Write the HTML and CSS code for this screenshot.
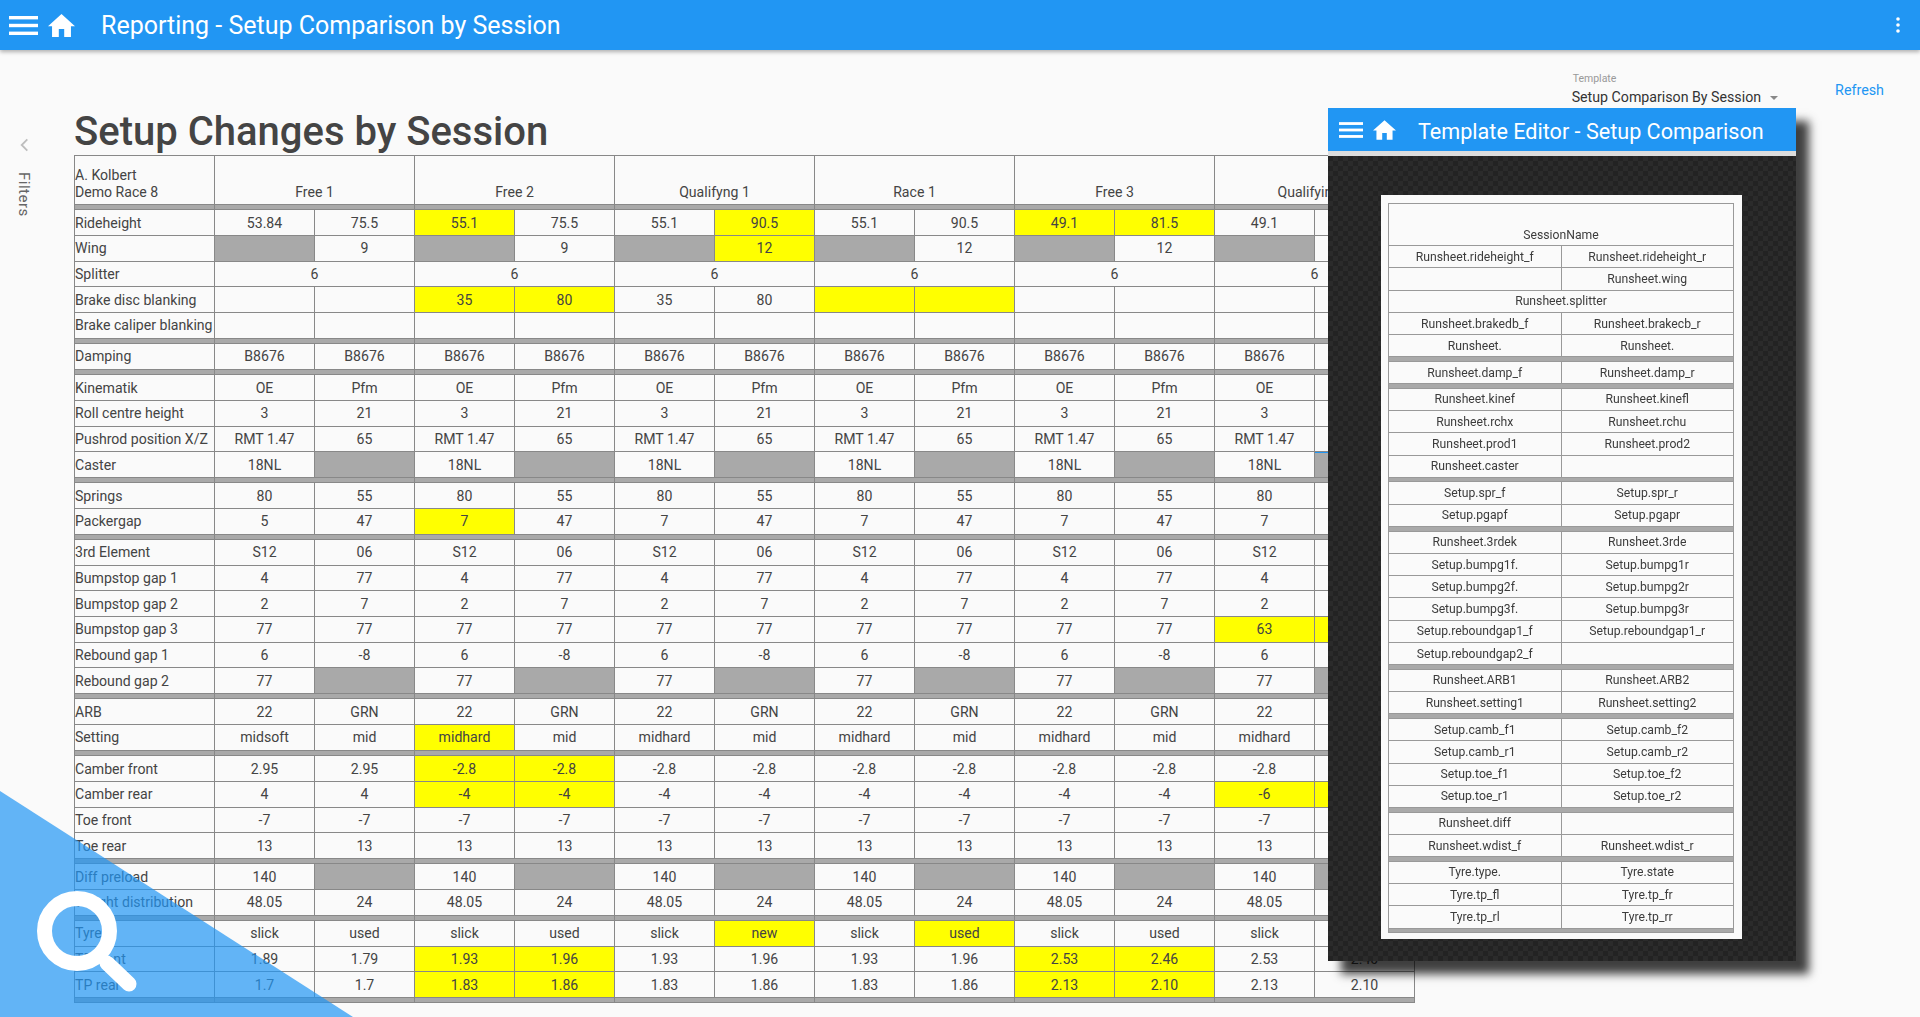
FILE: index.html
```html
<!DOCTYPE html>
<html lang="en">
<head>
    <meta charset="UTF-8">
    <title>Reporting - Setup Comparison by Session</title>
    <link rel="stylesheet" href="styles.css">
</head>
<body>
    <header class="topbar">
        <svg class="menu-icon" viewBox="0 0 29 19"><rect width="29" height="3.4" y="0"/><rect width="29" height="3.4" y="7.8"/><rect width="29" height="3.4" y="15.6"/></svg>
        <svg class="home-icon" viewBox="2 3 20 17"><path d="M10 20v-6h4v6h5v-8h3L12 3 2 12h3v8z"/></svg>
        <span class="topbar-title">Reporting - Setup Comparison by Session</span>
        <svg class="kebab-icon" viewBox="0 0 4 16"><circle cx="2" cy="2" r="1.8"/><circle cx="2" cy="8" r="1.8"/><circle cx="2" cy="14" r="1.8"/></svg>
    </header>

    <div class="page">
        <aside class="rail">
            <svg class="chevron" viewBox="0 0 8 12"><path d="M6.5 1 1.5 6l5 5" fill="none" stroke="#bdbdbd" stroke-width="1.6"/></svg>
            <span class="filters">Filters</span>
        </aside>

        <main class="content">
            <div class="toolbar">
                <div class="template-select">
                    <span class="template-label">Template</span>
                    <span class="template-value">Setup Comparison By Session<i class="caret"></i></span>
                </div>
                <a class="refresh">Refresh</a>
            </div>

            <h1>Setup Changes by Session</h1>

            <table class="report">
                <colgroup>
                    <col class="col-name">
                    <col><col><col><col><col><col><col><col><col><col><col><col>
                </colgroup>
                <tr class="head">
                    <td class="name">A. Kolbert<br>Demo Race 8</td>
                    <td colspan="2">Free 1</td><td colspan="2">Free 2</td><td colspan="2">Qualifyng 1</td><td colspan="2">Race 1</td><td colspan="2">Free 3</td><td colspan="2">Qualifying 2</td>
                </tr>
                <tr class="sep"><td></td><td colspan="2"></td><td colspan="2"></td><td colspan="2"></td><td colspan="2"></td><td colspan="2"></td><td colspan="2"></td></tr>
                <tr><td class="name">Rideheight</td><td>53.84</td><td>75.5</td><td class="hl">55.1</td><td>75.5</td><td>55.1</td><td class="hl">90.5</td><td>55.1</td><td>90.5</td><td class="hl">49.1</td><td class="hl">81.5</td><td>49.1</td><td>81.5</td></tr>
                <tr><td class="name">Wing</td><td class="na"></td><td>9</td><td class="na"></td><td>9</td><td class="na"></td><td class="hl">12</td><td class="na"></td><td>12</td><td class="na"></td><td>12</td><td class="na"></td><td>12</td></tr>
                <tr><td class="name">Splitter</td><td colspan="2">6</td><td colspan="2">6</td><td colspan="2">6</td><td colspan="2">6</td><td colspan="2">6</td><td colspan="2">6</td></tr>
                <tr><td class="name">Brake disc blanking</td><td></td><td></td><td class="hl">35</td><td class="hl">80</td><td>35</td><td>80</td><td class="hl"></td><td class="hl"></td><td></td><td></td><td></td><td></td></tr>
                <tr><td class="name">Brake caliper blanking</td><td></td><td></td><td></td><td></td><td></td><td></td><td></td><td></td><td></td><td></td><td></td><td></td></tr>
                <tr class="sep"><td></td><td colspan="2"></td><td colspan="2"></td><td colspan="2"></td><td colspan="2"></td><td colspan="2"></td><td colspan="2"></td></tr>
                <tr><td class="name">Damping</td><td>B8676</td><td>B8676</td><td>B8676</td><td>B8676</td><td>B8676</td><td>B8676</td><td>B8676</td><td>B8676</td><td>B8676</td><td>B8676</td><td>B8676</td><td>B8676</td></tr>
                <tr class="sep"><td></td><td colspan="2"></td><td colspan="2"></td><td colspan="2"></td><td colspan="2"></td><td colspan="2"></td><td colspan="2"></td></tr>
                <tr><td class="name">Kinematik</td><td>OE</td><td>Pfm</td><td>OE</td><td>Pfm</td><td>OE</td><td>Pfm</td><td>OE</td><td>Pfm</td><td>OE</td><td>Pfm</td><td>OE</td><td>Pfm</td></tr>
                <tr><td class="name">Roll centre height</td><td>3</td><td>21</td><td>3</td><td>21</td><td>3</td><td>21</td><td>3</td><td>21</td><td>3</td><td>21</td><td>3</td><td>21</td></tr>
                <tr><td class="name">Pushrod position X/Z</td><td>RMT 1.47</td><td>65</td><td>RMT 1.47</td><td>65</td><td>RMT 1.47</td><td>65</td><td>RMT 1.47</td><td>65</td><td>RMT 1.47</td><td>65</td><td>RMT 1.47</td><td>65</td></tr>
                <tr><td class="name">Caster</td><td>18NL</td><td class="na"></td><td>18NL</td><td class="na"></td><td>18NL</td><td class="na"></td><td>18NL</td><td class="na"></td><td>18NL</td><td class="na"></td><td>18NL</td><td class="na edge"></td></tr>
                <tr class="sep"><td></td><td colspan="2"></td><td colspan="2"></td><td colspan="2"></td><td colspan="2"></td><td colspan="2"></td><td colspan="2"></td></tr>
                <tr><td class="name">Springs</td><td>80</td><td>55</td><td>80</td><td>55</td><td>80</td><td>55</td><td>80</td><td>55</td><td>80</td><td>55</td><td>80</td><td>55</td></tr>
                <tr><td class="name">Packergap</td><td>5</td><td>47</td><td class="hl">7</td><td>47</td><td>7</td><td>47</td><td>7</td><td>47</td><td>7</td><td>47</td><td>7</td><td>47</td></tr>
                <tr class="sep"><td></td><td colspan="2"></td><td colspan="2"></td><td colspan="2"></td><td colspan="2"></td><td colspan="2"></td><td colspan="2"></td></tr>
                <tr><td class="name">3rd Element</td><td>S12</td><td>06</td><td>S12</td><td>06</td><td>S12</td><td>06</td><td>S12</td><td>06</td><td>S12</td><td>06</td><td>S12</td><td>06</td></tr>
                <tr><td class="name">Bumpstop gap 1</td><td>4</td><td>77</td><td>4</td><td>77</td><td>4</td><td>77</td><td>4</td><td>77</td><td>4</td><td>77</td><td>4</td><td>77</td></tr>
                <tr><td class="name">Bumpstop gap 2</td><td>2</td><td>7</td><td>2</td><td>7</td><td>2</td><td>7</td><td>2</td><td>7</td><td>2</td><td>7</td><td>2</td><td>7</td></tr>
                <tr><td class="name">Bumpstop gap 3</td><td>77</td><td>77</td><td>77</td><td>77</td><td>77</td><td>77</td><td>77</td><td>77</td><td>77</td><td>77</td><td class="hl">63</td><td class="hl">63</td></tr>
                <tr><td class="name">Rebound gap 1</td><td>6</td><td>-8</td><td>6</td><td>-8</td><td>6</td><td>-8</td><td>6</td><td>-8</td><td>6</td><td>-8</td><td>6</td><td>-8</td></tr>
                <tr><td class="name">Rebound gap 2</td><td>77</td><td class="na"></td><td>77</td><td class="na"></td><td>77</td><td class="na"></td><td>77</td><td class="na"></td><td>77</td><td class="na"></td><td>77</td><td class="na"></td></tr>
                <tr class="sep"><td></td><td colspan="2"></td><td colspan="2"></td><td colspan="2"></td><td colspan="2"></td><td colspan="2"></td><td colspan="2"></td></tr>
                <tr><td class="name">ARB</td><td>22</td><td>GRN</td><td>22</td><td>GRN</td><td>22</td><td>GRN</td><td>22</td><td>GRN</td><td>22</td><td>GRN</td><td>22</td><td>GRN</td></tr>
                <tr><td class="name">Setting</td><td>midsoft</td><td>mid</td><td class="hl">midhard</td><td>mid</td><td>midhard</td><td>mid</td><td>midhard</td><td>mid</td><td>midhard</td><td>mid</td><td>midhard</td><td>mid</td></tr>
                <tr class="sep"><td></td><td colspan="2"></td><td colspan="2"></td><td colspan="2"></td><td colspan="2"></td><td colspan="2"></td><td colspan="2"></td></tr>
                <tr><td class="name">Camber front</td><td>2.95</td><td>2.95</td><td class="hl">-2.8</td><td class="hl">-2.8</td><td>-2.8</td><td>-2.8</td><td>-2.8</td><td>-2.8</td><td>-2.8</td><td>-2.8</td><td>-2.8</td><td>-2.8</td></tr>
                <tr><td class="name">Camber rear</td><td>4</td><td>4</td><td class="hl">-4</td><td class="hl">-4</td><td>-4</td><td>-4</td><td>-4</td><td>-4</td><td>-4</td><td>-4</td><td class="hl">-6</td><td class="hl">-6</td></tr>
                <tr><td class="name">Toe front</td><td>-7</td><td>-7</td><td>-7</td><td>-7</td><td>-7</td><td>-7</td><td>-7</td><td>-7</td><td>-7</td><td>-7</td><td>-7</td><td>-7</td></tr>
                <tr><td class="name">Toe rear</td><td>13</td><td>13</td><td>13</td><td>13</td><td>13</td><td>13</td><td>13</td><td>13</td><td>13</td><td>13</td><td>13</td><td>13</td></tr>
                <tr class="sep"><td></td><td colspan="2"></td><td colspan="2"></td><td colspan="2"></td><td colspan="2"></td><td colspan="2"></td><td colspan="2"></td></tr>
                <tr><td class="name">Diff preload</td><td>140</td><td class="na"></td><td>140</td><td class="na"></td><td>140</td><td class="na"></td><td>140</td><td class="na"></td><td>140</td><td class="na"></td><td>140</td><td class="na"></td></tr>
                <tr><td class="name">Weight distribution</td><td>48.05</td><td>24</td><td>48.05</td><td>24</td><td>48.05</td><td>24</td><td>48.05</td><td>24</td><td>48.05</td><td>24</td><td>48.05</td><td>24</td></tr>
                <tr class="sep"><td></td><td colspan="2"></td><td colspan="2"></td><td colspan="2"></td><td colspan="2"></td><td colspan="2"></td><td colspan="2"></td></tr>
                <tr><td class="name">Tyre</td><td>slick</td><td>used</td><td>slick</td><td>used</td><td>slick</td><td class="hl">new</td><td>slick</td><td class="hl">used</td><td>slick</td><td>used</td><td>slick</td><td>used</td></tr>
                <tr><td class="name">TP front</td><td>1.89</td><td>1.79</td><td class="hl">1.93</td><td class="hl">1.96</td><td>1.93</td><td>1.96</td><td>1.93</td><td>1.96</td><td class="hl">2.53</td><td class="hl">2.46</td><td>2.53</td><td>2.40</td></tr>
                <tr><td class="name">TP rear</td><td>1.7</td><td>1.7</td><td class="hl">1.83</td><td class="hl">1.86</td><td>1.83</td><td>1.86</td><td>1.83</td><td>1.86</td><td class="hl">2.13</td><td class="hl">2.10</td><td>2.13</td><td>2.10</td></tr>
                <tr class="sep"><td></td><td colspan="2"></td><td colspan="2"></td><td colspan="2"></td><td colspan="2"></td><td colspan="2"></td><td colspan="2"></td></tr>
            </table>
        </main>
    </div>

    <section class="editor">
        <header class="editor-bar">
            <svg class="editor-menu" viewBox="0 0 29 19"><rect width="29" height="3.4" y="0"/><rect width="29" height="3.4" y="7.8"/><rect width="29" height="3.4" y="15.6"/></svg>
            <svg class="editor-home" viewBox="2 3 20 17"><path d="M10 20v-6h4v6h5v-8h3L12 3 2 12h3v8z"/></svg>
            <span class="editor-title">Template Editor - Setup Comparison</span>
        </header>
        <div class="editor-body">
            <div class="sheet">
                <table class="template">
                    <tr class="head"><td colspan="2">SessionName</td></tr>
                    <tr><td>Runsheet.rideheight_f</td><td>Runsheet.rideheight_r</td></tr>
                    <tr><td></td><td>Runsheet.wing</td></tr>
                    <tr><td colspan="2">Runsheet.splitter</td></tr>
                    <tr><td>Runsheet.brakedb_f</td><td>Runsheet.brakecb_r</td></tr>
                    <tr><td>Runsheet.</td><td>Runsheet.</td></tr>
                    <tr class="sep"><td colspan="2"></td></tr>
                    <tr><td>Runsheet.damp_f</td><td>Runsheet.damp_r</td></tr>
                    <tr class="sep"><td colspan="2"></td></tr>
                    <tr><td>Runsheet.kinef</td><td>Runsheet.kinefl</td></tr>
                    <tr><td>Runsheet.rchx</td><td>Runsheet.rchu</td></tr>
                    <tr><td>Runsheet.prod1</td><td>Runsheet.prod2</td></tr>
                    <tr><td>Runsheet.caster</td><td></td></tr>
                    <tr class="sep"><td colspan="2"></td></tr>
                    <tr><td>Setup.spr_f</td><td>Setup.spr_r</td></tr>
                    <tr><td>Setup.pgapf</td><td>Setup.pgapr</td></tr>
                    <tr class="sep"><td colspan="2"></td></tr>
                    <tr><td>Runsheet.3rdek</td><td>Runsheet.3rde</td></tr>
                    <tr><td>Setup.bumpg1f.</td><td>Setup.bumpg1r</td></tr>
                    <tr><td>Setup.bumpg2f.</td><td>Setup.bumpg2r</td></tr>
                    <tr><td>Setup.bumpg3f.</td><td>Setup.bumpg3r</td></tr>
                    <tr><td>Setup.reboundgap1_f</td><td>Setup.reboundgap1_r</td></tr>
                    <tr><td>Setup.reboundgap2_f</td><td></td></tr>
                    <tr class="sep"><td colspan="2"></td></tr>
                    <tr><td>Runsheet.ARB1</td><td>Runsheet.ARB2</td></tr>
                    <tr><td>Runsheet.setting1</td><td>Runsheet.setting2</td></tr>
                    <tr class="sep"><td colspan="2"></td></tr>
                    <tr><td>Setup.camb_f1</td><td>Setup.camb_f2</td></tr>
                    <tr><td>Setup.camb_r1</td><td>Setup.camb_r2</td></tr>
                    <tr><td>Setup.toe_f1</td><td>Setup.toe_f2</td></tr>
                    <tr><td>Setup.toe_r1</td><td>Setup.toe_r2</td></tr>
                    <tr class="sep"><td colspan="2"></td></tr>
                    <tr><td>Runsheet.diff</td><td></td></tr>
                    <tr><td>Runsheet.wdist_f</td><td>Runsheet.wdist_r</td></tr>
                    <tr class="sep"><td colspan="2"></td></tr>
                    <tr><td>Tyre.type.</td><td>Tyre.state</td></tr>
                    <tr><td>Tyre.tp_fl</td><td>Tyre.tp_fr</td></tr>
                    <tr><td>Tyre.tp_rl</td><td>Tyre.tp_rr</td></tr>
                    <tr class="sep"><td colspan="2"></td></tr>
                </table>
            </div>
        </div>
    </section>

    <div class="search-corner"></div>
    <svg class="search-icon" viewBox="0 0 140 140"><circle cx="42" cy="42" r="32.5" fill="none" stroke="#fff" stroke-width="15"/><path d="M72 74 94 95" stroke="#fff" stroke-width="15" stroke-linecap="round"/></svg>
</body>
</html>
```
FILE: styles.css
```css
html, body {
    height: 100%;
}

body {
    margin: 0;
    background-color: #fafafa;
    font-family: Roboto, "Liberation Sans", sans-serif;
    color: #444;
    overflow: hidden;
}

.topbar {
    display: flex;
    align-items: center;
    height: 50px;
    padding: 0 20px 0 9px;
    background-color: #2196f3;
    box-shadow: 0 2px 4px rgba(0, 0, 0, 0.3);
    color: white;
}

.menu-icon {
    width: 29px;
    height: 19px;
    fill: white;
}

.home-icon {
    width: 27px;
    height: 23px;
    margin-left: 10px;
    fill: white;
}

.topbar-title {
    margin-left: 26px;
    padding-top: 1px;
    font-size: 25px;
    flex: 1;
}

.kebab-icon {
    width: 4px;
    height: 16px;
    fill: white;
}

.page {
    display: flex;
}

.rail {
    display: flex;
    flex-direction: column;
    align-items: center;
    width: 74px;
    flex: none;
    box-sizing: border-box;
    padding: 88px 26px 0 0;
}

.chevron {
    width: 9px;
    height: 14px;
}

.filters {
    margin-top: 20px;
    writing-mode: vertical-rl;
    font-size: 15px;
    letter-spacing: 0.5px;
    color: #666;
}

.content {
    flex: 1;
}

.toolbar {
    display: flex;
    justify-content: flex-end;
    align-items: flex-start;
    height: 58px;
    padding-right: 36px;
}

.template-select {
    display: flex;
    flex-direction: column;
    margin-top: 22px;
}

.template-label {
    margin-left: 1px;
    font-size: 10.5px;
    color: #999;
}

.template-value {
    margin-top: 4px;
    font-size: 14.2px;
    color: #333;
}

.caret {
    display: inline-block;
    margin-left: 9px;
    vertical-align: middle;
    border: 4.5px solid transparent;
    border-top-color: #888;
    border-bottom-width: 0;
}

.refresh {
    margin: 32px 0 0 57px;
    font-size: 14.3px;
    color: #2196f3;
}

h1 {
    margin: 0;
    height: 47px;
    font-size: 40px;
    font-weight: 500;
    line-height: 48px;
    color: #444;
}

.report {
    table-layout: fixed;
    border-collapse: collapse;
    width: 1341px;
    font-size: 14.1px;
}

.report .col-name {
    width: 140px;
}

.report td {
    border: 1px solid #888;
    padding: 0;
    text-align: center;
    white-space: nowrap;
    overflow: hidden;
}

.report tr {
    height: 25.68px;
}

.report .head {
    height: 49px;
}

.report .head td {
    vertical-align: bottom;
    padding-bottom: 3px;
    line-height: 17px;
}

.report td.name {
    text-align: left;
}

.report .hl {
    background-color: #ffff00;
}

.report .na {
    background-color: #a9a9a9;
}

.report .edge {
    box-shadow: inset 0 1px 0 #2196f3;
}

.report .sep {
    height: 5.4px;
}

.report .sep td {
    background-color: #a9a9a9;
}

.editor {
    position: absolute;
    left: 1328px;
    top: 108px;
    width: 468px;
    height: 853px;
    display: flex;
    flex-direction: column;
    box-shadow: 13px 13px 9px rgba(0, 0, 0, 0.75);
}

.editor-bar {
    display: flex;
    align-items: center;
    height: 43px;
    flex: none;
    padding-left: 11px;
    background-color: #2196f3;
    border-bottom: 5px solid #ddd;
    color: white;
}

.editor-menu {
    width: 24px;
    height: 16px;
    fill: white;
}

.editor-home {
    width: 23px;
    height: 20px;
    margin-left: 10px;
    fill: white;
}

.editor-title {
    margin-left: 22px;
    padding-top: 4px;
    font-size: 21.6px;
}

.editor-body {
    flex: 1;
    padding: 39px 53px 0;
    background: repeating-conic-gradient(#2b2b2b 0 25%, #232323 0 50%) 0 0 / 10px 10px;
}

.sheet {
    width: 361px;
    height: 744px;
    box-sizing: border-box;
    padding: 8px 7px;
    background-color: #fafafa;
}

.template {
    table-layout: fixed;
    border-collapse: collapse;
    width: 346px;
    font-size: 12.2px;
    color: #3c3c3c;
    filter: blur(0.3px);
}

.template td {
    border: 1px solid #999;
    padding: 0;
    text-align: center;
    white-space: nowrap;
}

.template tr {
    height: 22.3px;
}

.template .head {
    height: 42px;
}

.template .head td {
    vertical-align: bottom;
    padding-bottom: 3px;
}

.template .sep {
    height: 4.5px;
}

.template .sep td {
    background-color: #a9a9a9;
}

.search-corner {
    position: absolute;
    left: 0;
    bottom: 0;
    width: 353px;
    height: 226px;
    background-color: rgba(33, 150, 243, 0.7);
    clip-path: polygon(0 0, 100% 100%, 0 100%);
}

.search-icon {
    position: absolute;
    left: 35px;
    top: 889px;
    width: 140px;
    height: 140px;
}
```
